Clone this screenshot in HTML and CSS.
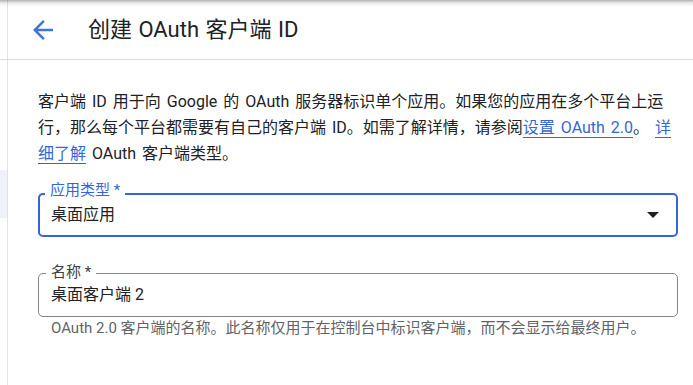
FILE: index.html
```html
<!DOCTYPE html>
<html lang="zh-CN">
<head>
<meta charset="utf-8">
<title>创建 OAuth 客户端 ID</title>
<link rel="stylesheet" href="styles.css">
</head>
<body>
<div class="page">
  <header class="topbar">
    <div class="rail"></div>
    <div class="topbar-main">
      <button class="back" type="button" aria-label="返回">
        <svg viewBox="0 0 24 24" width="30" height="30" aria-hidden="true"><path d="M20 11H7.83l5.59-5.59L12 4l-8 8 8 8 1.41-1.41L7.83 13H20v-2z"/></svg>
      </button>
      <h1 class="title">创建 OAuth 客户端 ID</h1>
    </div>
  </header>
  <div class="body">
    <div class="rail"><div class="rail-mark"></div></div>
    <main class="content">
      <p class="intro">客户端 ID 用于向 Google 的 OAuth 服务器标识单个应用。如果您的应用在多个平台上运行，那么每个平台都需要有自己的客户端 ID。如需了解详情，请参阅<a class="link" href="#">设置 OAuth 2.0</a>。 <a class="link" href="#">详细了解</a> OAuth 客户端类型。</p>
      <div class="field field-focused">
        <span class="field-label">应用类型 *</span>
        <span class="field-value">桌面应用</span>
        <span class="caret"></span>
      </div>
      <div class="field field-name">
        <span class="field-label">名称 *</span>
        <span class="field-value">桌面客户端 2</span>
      </div>
      <div class="hint">OAuth 2.0 客户端的名称。此名称仅用于在控制台中标识客户端，而不会显示给最终用户。</div>
    </main>
  </div>
</div>
</body>
</html>
```
FILE: styles.css
```css
* { box-sizing: border-box; }
html, body { margin: 0; padding: 0; background: #fff; }
body {
  font-family: Roboto, "Noto Sans CJK SC", sans-serif;
  color: #202124;
}
.page {
  position: relative;
  min-height: 100vh;
  display: flex;
  flex-direction: column;
}
.page::before {
  content: "";
  position: absolute;
  left: 0; right: 0; top: 0;
  height: 7px;
  background: linear-gradient(to bottom, rgba(0,0,0,0.3), rgba(0,0,0,0.08) 3px, rgba(0,0,0,0));
  pointer-events: none;
}
.rail {
  width: 8px;
  flex: none;
  border-right: 1px solid #e2e2e2;
}
.rail-mark {
  margin-top: 110px;
  height: 48px;
  background: #eef2fb;
}
.topbar {
  display: flex;
  height: 60px;
  border-bottom: 1px solid #dcdcdc;
}
.topbar-main {
  flex: 1;
  display: flex;
  align-items: center;
  padding-left: 20px;
}
.back {
  border: 0;
  background: none;
  padding: 0;
  width: 30px;
  height: 30px;
  display: flex;
  fill: #3d74d9;
}
.title {
  margin: 0 0 0 30px;
  font-size: 22px;
  font-weight: 400;
  line-height: 28px;
  word-spacing: 1px;
  color: #202124;
}
.body {
  flex: 1;
  display: flex;
}
.content {
  flex: 1;
  padding: 29px 15px 0 30px;
}
.intro {
  margin: 0 3px 0 0;
  font-size: 16px;
  line-height: 26px;
  word-spacing: 2px;
}
.link {
  color: #3367d6;
  text-decoration: underline;
  text-decoration-color: #3367d6;
  text-underline-offset: 4px;
}
.field {
  position: relative;
  display: flex;
  align-items: center;
  height: 44px;
  border: 1px solid #80868b;
  border-radius: 5px;
  padding: 0 12px;
  font-size: 16px;
  line-height: 20px;
}
.field-focused {
  margin-top: 26px;
  border: 2px solid #3367d6;
  padding: 0 17px 0 11px;
}
.field-name {
  margin-top: 36px;
}
.field-label {
  position: absolute;
  top: -10px;
  left: 7px;
  padding: 0 5px;
  background: #fff;
  font-size: 15px;
  line-height: 16px;
  color: #3c4043;
}
.field-focused .field-label {
  top: -13px;
  left: 5px;
  color: #3367d6;
}
.field-value {
  flex: 1;
  color: #202124;
}
.caret {
  width: 0;
  height: 0;
  border-left: 6px solid transparent;
  border-right: 6px solid transparent;
  border-top: 6px solid #202124;
}
.hint {
  margin-top: 3px;
  padding-left: 13px;
  font-size: 15px;
  line-height: 16px;
  color: #5f6368;
}
```
